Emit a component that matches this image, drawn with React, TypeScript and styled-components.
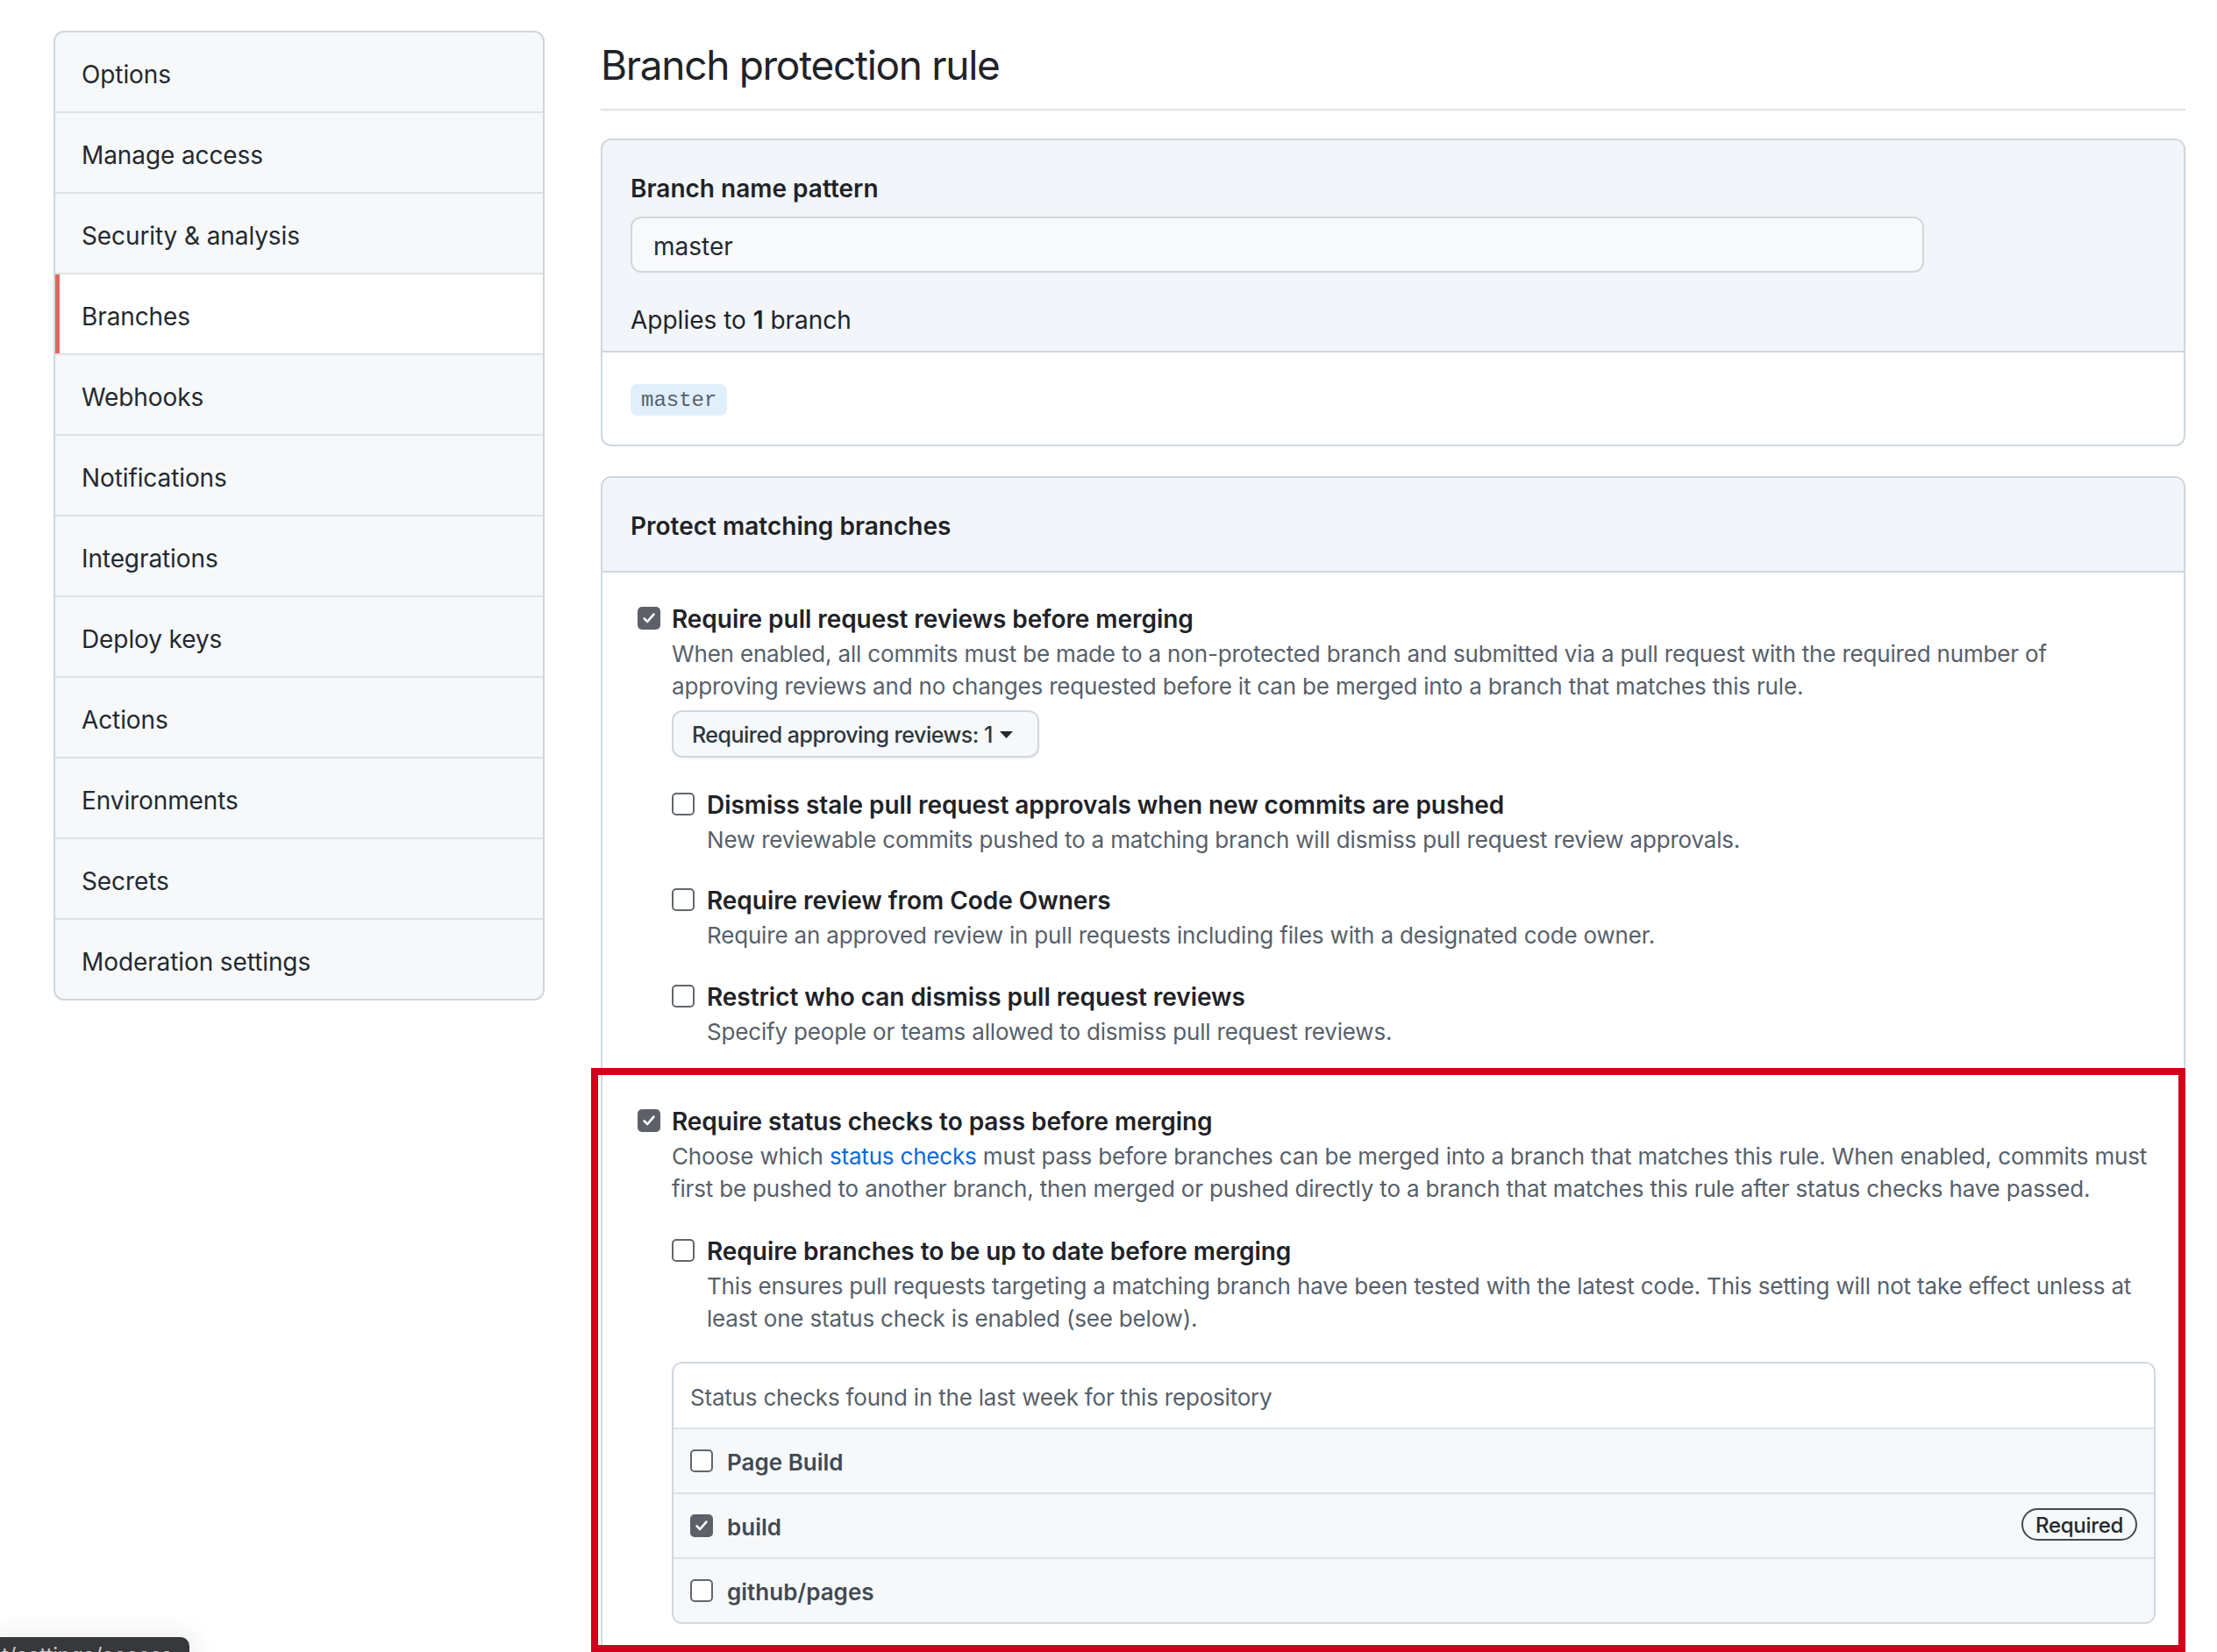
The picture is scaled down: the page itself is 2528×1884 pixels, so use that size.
import React from "react";
import styled, { createGlobalStyle, css } from "styled-components";

const GlobalStyle = createGlobalStyle`
  html, body { margin: 0; padding: 0; background: #ffffff; }
  body {
    font-family: Inter, "Noto Sans", "Liberation Sans", sans-serif;
    color: #24292f;
    -webkit-font-smoothing: antialiased;
  }
  * { box-sizing: border-box; }
`;

const Page = styled.div`
  position: relative;
  height: 1884px;
  overflow: hidden;
  display: flex;
  align-items: flex-start;
  gap: 64px;
  padding: 35px 36px 0 61px;
`;

const Sidebar = styled.nav`
  width: 560px;
  flex: none;
  border: 2px solid #d0d7de;
  border-radius: 12px;
  background: #f6f8fa;
  overflow: hidden;
`;

const NavItem = styled.a<{ $active?: boolean }>`
  position: relative;
  display: flex;
  align-items: center;
  height: 92px;
  padding: 5px 0 0 30px;
  font-size: 28px;
  letter-spacing: -0.1px;
  color: #24292f;
  text-decoration: none;
  border-top: 2px solid #dde2e7;
  &:first-child {
    height: 90px;
    border-top: none;
  }
  ${(p) =>
    p.$active &&
    css`
      background: #ffffff;
      &::before {
        content: "";
        position: absolute;
        left: 0;
        top: 0;
        bottom: 0;
        width: 5px;
        background: #e2665f;
      }
    `}
`;

const Main = styled.main`
  flex: 1;
  min-width: 0;
`;

const Subhead = styled.div`
  padding: 9px 0 20px;
  border-bottom: 2px solid #dde2e7;
  margin-bottom: 32px;
`;

const Title = styled.h2`
  margin: 0;
  font-size: 46px;
  line-height: 60px;
  font-weight: 400;
  letter-spacing: -1.3px;
  color: #1f2328;
`;

const Box = styled.section`
  border: 2px solid #d0d7de;
  border-radius: 12px;
  background: #ffffff;
  & + & {
    margin-top: 34px;
  }
`;

const BoxHeader = styled.div<{ $compact?: boolean }>`
  background: #f2f5f9;
  border-bottom: 2px solid #d0d7de;
  border-radius: 10px 10px 0 0;
  padding: ${(p) => (p.$compact ? "34px 32px 30px" : "34px 32px 14px")};
`;

const HeaderTitle = styled.div`
  font-size: 28px;
  line-height: 42px;
  font-weight: 600;
  color: #1f2328;
`;

const PatternInput = styled.input`
  display: block;
  width: 1475px;
  height: 64px;
  margin-top: 11px;
  padding: 3px 24px 0;
  border: 2px solid #d0d7de;
  border-radius: 12px;
  background: #f8f9fb;
  font-family: inherit;
  font-size: 28px;
  color: #24292f;
  outline: none;
`;

const Applies = styled.div`
  margin-top: 33px;
  font-size: 28px;
  line-height: 42px;
  color: #1f2328;
  b {
    font-weight: 600;
  }
`;

const BoxBody = styled.div<{ $pad: string }>`
  padding: ${(p) => p.$pad};
`;

const Code = styled.code`
  display: inline-block;
  height: 36px;
  line-height: 38px;
  padding: 0 12px;
  border-radius: 8px;
  background: #e1effb;
  color: #57606a;
  font-family: "Liberation Mono", "DejaVu Sans Mono", monospace;
  font-size: 24px;
`;

const Option = styled.div<{ $nested?: boolean; $gap?: number }>`
  display: grid;
  grid-template-columns: ${(p) => (p.$nested ? "40px" : "47px")} 1fr;
  margin-top: ${(p) => p.$gap ?? 0}px;
`;

const CheckCell = styled.div<{ $nested?: boolean }>`
  padding-top: 8px;
  padding-left: ${(p) => (p.$nested ? 0 : 8)}px;
`;

const OptionBody = styled.div`
  min-width: 0;
`;

const OptionTitle = styled.div`
  padding-top: 3px;
  font-size: 28px;
  line-height: 39px;
  font-weight: 600;
  letter-spacing: -0.05px;
  color: #1f2328;
`;

const Note = styled.div`
  padding-top: 1px;
  font-size: 26px;
  line-height: 37px;
  letter-spacing: -0.18px;
  color: #57606a;
  white-space: nowrap;
  margin-bottom: -1px;
  a {
    color: #0969da;
    text-decoration: none;
  }
`;

const CheckBoxMark = styled.span<{ $checked?: boolean }>`
  display: inline-flex;
  align-items: center;
  justify-content: center;
  flex: none;
  width: 26px;
  height: 26px;
  border-radius: 5px;
  background: ${(p) => (p.$checked ? "#5d6167" : "#ffffff")};
  border: 2px solid ${(p) => (p.$checked ? "#5d6167" : "#62676d")};
`;

const Dropdown = styled.button`
  display: inline-flex;
  align-items: center;
  gap: 7px;
  height: 54px;
  margin-top: 10px;
  padding: 2px 27px 0 21px;
  border: 2px solid #d0d7de;
  border-radius: 12px;
  background: #f6f8fa;
  box-shadow: 0 2px 0 rgba(27, 31, 36, 0.04);
  font-family: inherit;
  font-size: 25px;
  font-weight: 500;
  letter-spacing: -0.5px;
  color: #2f363d;
`;

const Highlight = styled.div`
  position: relative;
  margin-top: 63px;
  &::before {
    content: "";
    position: absolute;
    left: -45px;
    right: -34px;
    top: -39px;
    bottom: -32px;
    border: 8px solid #d0021b;
    pointer-events: none;
  }
`;

const ChecksTable = styled.div`
  margin-top: 32px;
  border: 2px solid #d0d7de;
  border-radius: 12px;
  overflow: hidden;
`;

const ChecksHeader = styled.div`
  display: flex;
  align-items: center;
  height: 73px;
  padding: 4px 19px 0;
  font-size: 26px;
  letter-spacing: -0.2px;
  color: #57606a;
  background: #ffffff;
`;

const CheckRow = styled.div`
  display: flex;
  align-items: center;
  gap: 16px;
  height: 74px;
  padding: 0 19px;
  border-top: 2px solid #dde2e7;
  background: #f6f8fa;
`;

const RowLabel = styled.span`
  padding-top: 3px;
  font-size: 26px;
  font-weight: 600;
  color: #424a53;
`;

const RequiredBadge = styled.span`
  margin-left: auto;
  margin-top: -4px;
  display: inline-flex;
  align-items: center;
  height: 37px;
  padding: 2px 14px 0;
  border: 2px solid #444b53;
  border-radius: 999px;
  font-size: 24px;
  font-weight: 500;
  letter-spacing: -0.3px;
  color: #24292f;
`;

const StatusBubble = styled.div`
  position: absolute;
  left: 0;
  top: 1867px;
  width: 216px;
  height: 40px;
  padding: 6px 0 0 2px;
  border-radius: 0 10px 0 0;
  background: #37383b;
  color: #c9cacc;
  font-size: 24px;
  white-space: nowrap;
  overflow: hidden;
  box-shadow: 0 0 26px 10px rgba(0, 0, 0, 0.05);
`;

function Checkbox({ checked }: { checked?: boolean }) {
  return (
    <CheckBoxMark $checked={checked}>
      {checked && (
        <svg width="18" height="18" viewBox="0 0 18 18" fill="none">
          <path
            d="M3.6 9.4 L7.2 13 L14.4 4.6"
            stroke="#ffffff"
            strokeWidth="2.6"
            strokeLinecap="round"
            strokeLinejoin="round"
          />
        </svg>
      )}
    </CheckBoxMark>
  );
}

function Caret() {
  return (
    <svg width="17" height="10" viewBox="0 0 17 10">
      <path d="M1 1 L16 1 L8.5 9 Z" fill="#24292f" />
    </svg>
  );
}

const navItems = [
  "Options",
  "Manage access",
  "Security & analysis",
  "Branches",
  "Webhooks",
  "Notifications",
  "Integrations",
  "Deploy keys",
  "Actions",
  "Environments",
  "Secrets",
  "Moderation settings",
];

const checks = [
  { name: "Page Build", checked: false, required: false },
  { name: "build", checked: true, required: true },
  { name: "github/pages", checked: false, required: false },
];

export default function App() {
  return (
    <>
      <GlobalStyle />
      <Page>
        <Sidebar>
          {navItems.map((item) => (
            <NavItem key={item} href="#" $active={item === "Branches"}>
              {item}
            </NavItem>
          ))}
        </Sidebar>

        <Main>
          <Subhead>
            <Title>Branch protection rule</Title>
          </Subhead>

          <Box>
            <BoxHeader>
              <HeaderTitle>Branch name pattern</HeaderTitle>
              <PatternInput defaultValue="master" readOnly />
              <Applies>
                Applies to <b>1</b> branch
              </Applies>
            </BoxHeader>
            <BoxBody $pad="36px 32px 33px">
              <Code>master</Code>
            </BoxBody>
          </Box>

          <Box>
            <BoxHeader $compact>
              <HeaderTitle>Protect matching branches</HeaderTitle>
            </BoxHeader>
            <BoxBody $pad="31px 32px 60px">
              <Option>
                <CheckCell>
                  <Checkbox checked />
                </CheckCell>
                <OptionBody>
                  <OptionTitle>Require pull request reviews before merging</OptionTitle>
                  <Note>
                    When enabled, all commits must be made to a non-protected branch and submitted via a pull request with the required number of
                    <br />
                    approving reviews and no changes requested before it can be merged into a branch that matches this rule.
                  </Note>
                  <Dropdown type="button">
                    Required approving reviews: 1
                    <Caret />
                  </Dropdown>

                  <Option $nested $gap={32}>
                    <CheckCell $nested>
                      <Checkbox />
                    </CheckCell>
                    <OptionBody>
                      <OptionTitle>Dismiss stale pull request approvals when new commits are pushed</OptionTitle>
                      <Note>New reviewable commits pushed to a matching branch will dismiss pull request review approvals.</Note>
                    </OptionBody>
                  </Option>

                  <Option $nested $gap={30}>
                    <CheckCell $nested>
                      <Checkbox />
                    </CheckCell>
                    <OptionBody>
                      <OptionTitle>Require review from Code Owners</OptionTitle>
                      <Note>Require an approved review in pull requests including files with a designated code owner.</Note>
                    </OptionBody>
                  </Option>

                  <Option $nested $gap={31}>
                    <CheckCell $nested>
                      <Checkbox />
                    </CheckCell>
                    <OptionBody>
                      <OptionTitle>Restrict who can dismiss pull request reviews</OptionTitle>
                      <Note>Specify people or teams allowed to dismiss pull request reviews.</Note>
                    </OptionBody>
                  </Option>
                </OptionBody>
              </Option>

              <Highlight>
                <Option>
                  <CheckCell>
                    <Checkbox checked />
                  </CheckCell>
                  <OptionBody>
                    <OptionTitle>Require status checks to pass before merging</OptionTitle>
                    <Note>
                      Choose which <a href="#">status checks</a> must pass before branches can be merged into a branch that matches this rule. When enabled, commits must
                      <br />
                      first be pushed to another branch, then merged or pushed directly to a branch that matches this rule after status checks have passed.
                    </Note>

                    <Option $nested $gap={32}>
                      <CheckCell $nested>
                        <Checkbox />
                      </CheckCell>
                      <OptionBody>
                        <OptionTitle>Require branches to be up to date before merging</OptionTitle>
                        <Note>
                          This ensures pull requests targeting a matching branch have been tested with the latest code. This setting will not take effect unless at
                          <br />
                          least one status check is enabled (see below).
                        </Note>
                      </OptionBody>
                    </Option>

                    <ChecksTable>
                      <ChecksHeader>Status checks found in the last week for this repository</ChecksHeader>
                      {checks.map((c) => (
                        <CheckRow key={c.name}>
                          <Checkbox checked={c.checked} />
                          <RowLabel>{c.name}</RowLabel>
                          {c.required && <RequiredBadge>Required</RequiredBadge>}
                        </CheckRow>
                      ))}
                    </ChecksTable>
                  </OptionBody>
                </Option>
              </Highlight>
            </BoxBody>
          </Box>
        </Main>

        <StatusBubble>t/settings/access</StatusBubble>
      </Page>
    </>
  );
}
